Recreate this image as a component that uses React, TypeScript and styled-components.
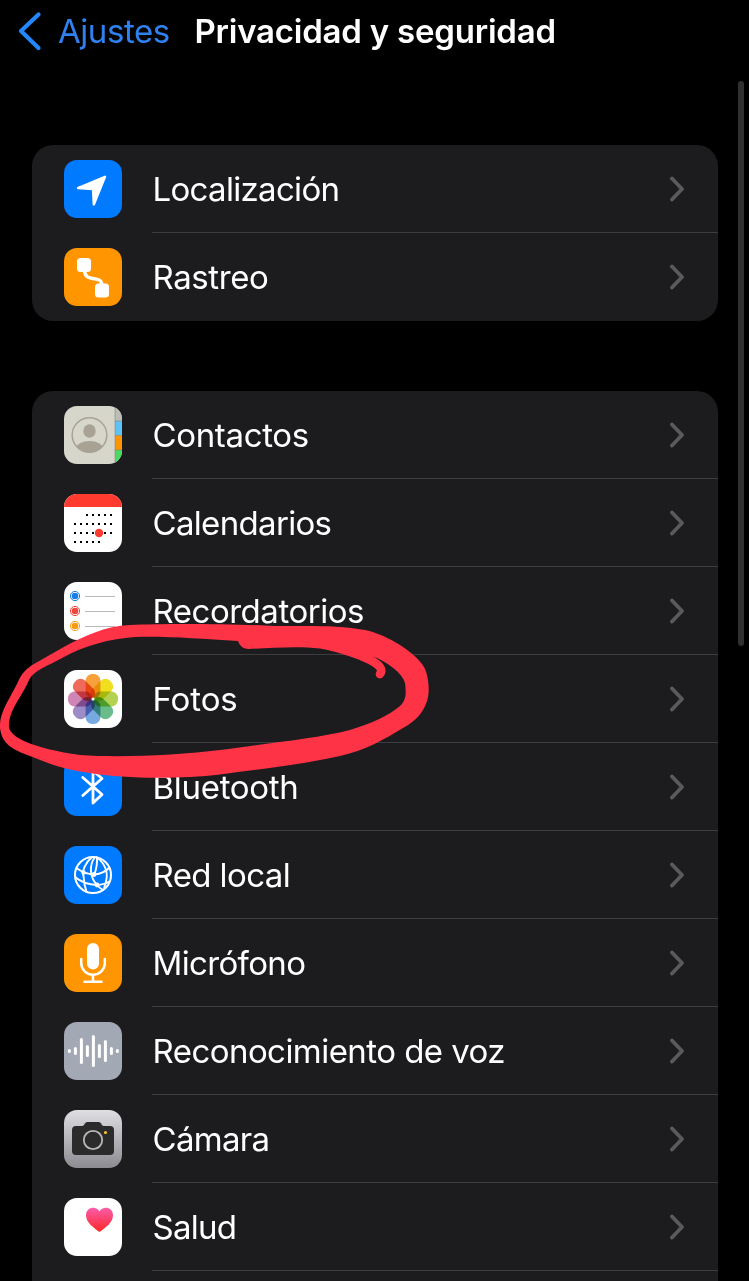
import React from "react"
import styled, { createGlobalStyle } from "styled-components"

const GlobalStyle = createGlobalStyle`
  body {
    margin: 0;
    background: #000;
    overflow: hidden;
  }
`;

const Screen = styled.main`
  position: relative;
  height: 1281px;
  overflow: hidden;
  background: #000;
  color: #fff;
  font-family: Inter, "Liberation Sans", sans-serif;
`;

const Header = styled.header`
  display: flex;
  align-items: center;
  height: 62px;
  padding-left: 18px;
  white-space: nowrap;
`;

const Back = styled.a`
  display: flex;
  align-items: center;
  gap: 16px;
  width: 176.5px;
  color: #2f81f0;
  font-size: 33px;
  letter-spacing: -0.45px;
`;

const Title = styled.h1`
  margin: 0;
  font-size: 33px;
  font-weight: 600;
  letter-spacing: -0.22px;
`;

const Content = styled.div`
  display: flex;
  flex-direction: column;
  gap: 70px;
  padding: 83px 31px 0 32px;
`;

const Group = styled.ul`
  margin: 0;
  padding: 0;
  list-style: none;
  border-radius: 21px;
  background: #1c1c1e;
  overflow: hidden;
`;

const Row = styled.li`
  display: flex;
  align-items: center;
  gap: 30px;
  height: 88px;
  padding-left: 32px;
`;

const Icon = styled.svg`
  flex: none;
  width: 58px;
  height: 58px;
  border-radius: 13px;
`;

const RowBody = styled.div<{ $last?: boolean }>`
  flex: 1;
  display: flex;
  align-items: center;
  justify-content: space-between;
  box-sizing: border-box;
  height: 88px;
  padding-right: 33px;
  border-bottom: 1px solid ${props => props.$last ? "transparent" : "#3d3d41"};
`;

const Label = styled.span<{ $spacing: number }>`
  padding-left: 0.5px;
  font-size: 33px;
  line-height: 44px;
  white-space: nowrap;
  letter-spacing: ${props => props.$spacing}px;
`;

const ScrollBar = styled.div`
  position: absolute;
  top: 81px;
  right: 5px;
  width: 6px;
  height: 565px;
  border-radius: 3px;
  background: #303030;
`;

const Marker = styled.svg`
  position: absolute;
  top: 0;
  left: 0;
  pointer-events: none;
`;

const Petal = styled.rect`
  mix-blend-mode: multiply;
`;

function Chevron() {
  return (
    <svg width="16" height="26" viewBox="0 0 16 26" fill="none" stroke="#5a5a5e" strokeWidth="3.8" strokeLinecap="round" strokeLinejoin="round">
      <path d="M3 2.5 13 13 3 23.5" />
    </svg>
  )
}

function LocationIcon() {
  return (
    <Icon viewBox="0 0 58 58">
      <rect width="58" height="58" fill="#007aff" />
      <path d="M14 28 41 16.8 29.8 44.5 29 29Z" fill="#fff" stroke="#fff" strokeWidth="2.4" strokeLinejoin="round" />
    </Icon>
  )
}

function TrackingIcon() {
  return (
    <Icon viewBox="0 0 58 58">
      <rect width="58" height="58" fill="#ff9500" />
      <rect x="13" y="10" width="14" height="14" rx="3.5" fill="#fff" />
      <rect x="31" y="35.5" width="14" height="14" rx="3.5" fill="#fff" />
      <path d="M20.5 22C20.5 36 37.8 26 37.8 37" fill="none" stroke="#fff" strokeWidth="3.4" />
    </Icon>
  )
}

function ContactsIcon() {
  return (
    <Icon viewBox="0 0 58 58">
      <defs>
        <clipPath id="contact"><circle cx="25.5" cy="29" r="17.3" /></clipPath>
      </defs>
      <rect width="58" height="58" fill="#d7d6cb" />
      <rect x="51" width="7" height="15" fill="#bdbdb8" />
      <rect x="51" y="15" width="7" height="14.5" fill="#5bc2fa" />
      <rect x="51" y="29.5" width="7" height="14.5" fill="#ff9500" />
      <rect x="51" y="44" width="7" height="14" fill="#4cd964" />
      <path d="M51 0V58M51 15H58M51 29.5H58M51 44H58" stroke="#77766d" strokeOpacity=".6" strokeWidth=".8" />
      <circle cx="25.5" cy="29" r="17.3" fill="none" stroke="#a8a295" strokeWidth="1.5" />
      <g clipPath="url(#contact)" fill="#a8a295">
        <ellipse cx="25.5" cy="25" rx="6.2" ry="6.8" />
        <ellipse cx="25.5" cy="43" rx="13.5" ry="8" />
      </g>
    </Icon>
  )
}

function CalendarIcon() {
  const lines = [
    { y: 21, from: 2, to: 6 },
    { y: 30, from: 0, to: 6 },
    { y: 39, from: 0, to: 6 },
    { y: 48, from: 0, to: 4 },
  ]
  return (
    <Icon viewBox="0 0 58 58">
      <rect width="58" height="58" fill="#fff" />
      <rect width="58" height="13" fill="#ff3b30" />
      {lines.map(line => [0, 1, 2, 3, 4, 5, 6]
        .filter(day => day >= line.from && day <= line.to)
        .map(day => <rect key={`${line.y}-${day}`} x={10 + day * 6} y={line.y - 1} width="2" height="2" fill="#000" />)
      )}
      <circle cx="35" cy="39" r="4.2" fill="#ff3b30" />
    </Icon>
  )
}

function RemindersIcon() {
  const items = [
    { y: 14, color: "#1a7ce6" },
    { y: 29, color: "#f0453c" },
    { y: 44, color: "#f99a14" },
  ]
  return (
    <Icon viewBox="0 0 58 58">
      <rect width="58" height="58" fill="#fff" />
      {items.map(item => (
        <g key={item.y}>
          <circle cx="11" cy={item.y} r="4.6" fill="none" stroke={item.color} strokeWidth="1" />
          <circle cx="11" cy={item.y} r="3.3" fill={item.color} />
          <path d={`M21 ${item.y + .5}H51`} stroke="#b9b9bb" strokeWidth="1" />
        </g>
      ))}
    </Icon>
  )
}

function PhotosIcon() {
  const petals = ["#f8a13a", "#efdf20", "#b3d251", "#69bd8b", "#76a9df", "#9e8cc8", "#cf86b7", "#ef6a5b"]
  return (
    <Icon viewBox="0 0 58 58">
      <rect width="58" height="58" fill="#fff" />
      {petals.map((color, i) => (
        <Petal key={color} x="21.6" y="4" width="14.8" height="24.3" rx="6.6" fill={color} transform={`rotate(${i * 45} 29 29)`} />
      ))}
      <circle cx="29" cy="29" r="1.5" fill="#fff" />
    </Icon>
  )
}

function BluetoothIcon() {
  return (
    <Icon viewBox="0 0 58 58">
      <rect width="58" height="58" fill="#007aff" />
      <path d="M18.8 19.5 38 36.5 29 45V12.8L38 20.5 18.8 37.5" fill="none" stroke="#fff" strokeWidth="2.8" strokeLinejoin="round" strokeLinecap="round" />
    </Icon>
  )
}

function NetworkIcon() {
  return (
    <Icon viewBox="0 0 58 58">
      <rect width="58" height="58" fill="#007aff" />
      <g fill="none" stroke="#fff" strokeWidth="1.9">
        <circle cx="29" cy="29" r="18" strokeWidth="2.1" />
        <path d="M28 11C21 17 18 25 19.5 30Q20 39 22.5 45.5M31 11C25 19 25.5 31 33 39Q35.5 42 39 44M32 11C39 15 44 24 42.5 33Q42 37 40 42M33 11Q33.5 20 30.5 28" />
        <path d="M12.5 22Q20 28 30.5 28.5Q40 27.5 45.5 21.5M11 31Q20 38.5 33 39Q41 38.5 46 35" />
      </g>
      <circle cx="19.5" cy="26.5" r="2.2" fill="#fff" />
      <circle cx="30" cy="28.5" r="2.4" fill="#fff" />
      <circle cx="33" cy="39" r="2.4" fill="#fff" />
    </Icon>
  )
}

function MicrophoneIcon() {
  return (
    <Icon viewBox="0 0 58 58">
      <rect width="58" height="58" fill="#ff9500" />
      <rect x="23" y="9" width="12" height="26.5" rx="6" fill="#fff" />
      <path d="M17.2 25V29A11.8 11.8 0 0 0 40.8 29V25M29 41V47.5M20.5 47.7H37.5" fill="none" stroke="#fff" strokeWidth="2.5" strokeLinecap="round" />
    </Icon>
  )
}

function SpeechIcon() {
  const bars = [4, 8, 26, 12, 32, 14, 22, 8, 4]
  return (
    <Icon viewBox="0 0 58 58">
      <rect width="58" height="58" fill="#a3a8b5" />
      {bars.map((height, i) => (
        <rect key={i} x={3.9 + i * 6} y={29 - height / 2} width="3" height={height} rx="1.5" fill="#fff" />
      ))}
    </Icon>
  )
}

function CameraIcon() {
  return (
    <Icon viewBox="0 0 58 58">
      <defs>
        <linearGradient id="camera" x2="0" y2="1">
          <stop stopColor="#dfdee2" />
          <stop offset="1" stopColor="#8c8b91" />
        </linearGradient>
      </defs>
      <rect width="58" height="58" fill="url(#camera)" />
      <path d="M12 16H18C21 16 20 12 23.5 12H34.5C38 12 37 16 40 16H46Q50 16 50 20V41Q50 45 46 45H12Q8 45 8 41V20Q8 16 12 16Z" fill="#2b2b2c" />
      <circle cx="29" cy="30" r="9.2" fill="#2b2b2c" stroke="#b7b7bb" strokeWidth="1.8" />
      <circle cx="41.5" cy="22.5" r="1.5" fill="#ffc72e" />
    </Icon>
  )
}

function HealthIcon() {
  return (
    <Icon viewBox="0 0 58 58">
      <defs>
        <linearGradient id="heart" x2="0" y2="1">
          <stop stopColor="#fa5baa" />
          <stop offset="1" stopColor="#fd2827" />
        </linearGradient>
      </defs>
      <rect width="58" height="58" fill="#fff" />
      <path d="M35.5 34C30 30 22 24.5 22 17.5C22 9 32 7.5 35.5 13.5C39 7.5 49 9 49 17.5C49 24.5 41 30 35.5 34Z" fill="url(#heart)" />
    </Icon>
  )
}

interface Item {
  label: string,
  spacing: number,
  icon: () => React.JSX.Element,
}

const groups: Item[][] = [
  [
    { label: "Localización", spacing: -0.68, icon: LocationIcon },
    { label: "Rastreo", spacing: -0.4, icon: TrackingIcon },
  ],
  [
    { label: "Contactos", spacing: -0.35, icon: ContactsIcon },
    { label: "Calendarios", spacing: -0.67, icon: CalendarIcon },
    { label: "Recordatorios", spacing: -0.48, icon: RemindersIcon },
    { label: "Fotos", spacing: -0.1, icon: PhotosIcon },
    { label: "Bluetooth", spacing: -0.3, icon: BluetoothIcon },
    { label: "Red local", spacing: -0.6, icon: NetworkIcon },
    { label: "Micrófono", spacing: -0.65, icon: MicrophoneIcon },
    { label: "Reconocimiento de voz", spacing: -0.55, icon: SpeechIcon },
    { label: "Cámara", spacing: -0.7, icon: CameraIcon },
    { label: "Salud", spacing: -0.75, icon: HealthIcon },
  ],
]

export default function App() {
  return (
    <>
      <GlobalStyle />
      <Screen>
        <Header>
          <Back>
            <svg width="24" height="40" viewBox="0 0 24 40" fill="none" stroke="#2388ff" strokeWidth="4.2" strokeLinecap="round" strokeLinejoin="round">
              <path d="M20.5 3.5 3 20 20.5 37" />
            </svg>
            Ajustes
          </Back>
          <Title>Privacidad y seguridad</Title>
        </Header>
        <Content>
          {groups.map((items, g) => (
            <Group key={g}>
              {items.map(({ label, spacing, icon: ItemIcon }, i) => (
                <Row key={label}>
                  <ItemIcon />
                  <RowBody $last={g === 0 && i === items.length - 1}>
                    <Label $spacing={spacing}>{label}</Label>
                    <Chevron />
                  </RowBody>
                </Row>
              ))}
              {g === 1 && <Row />}
            </Group>
          ))}
        </Content>
        <ScrollBar />
        <Marker width="440" height="800" viewBox="0 0 440 800">
          <path
            fill="#ff3346"
            d="M0 728C-1 713 9 700 18 682C21 674 27 668 34 664L62 648C84 636 105 626 130 625C170 623 235 624 275 626C310 626 340 625 365 630C389 635 417 654 424 667C429 676 430 693 427 701C423 714 414 722 403 728C385 739 366 750 340 756C300 765 260 769 220 774.5C180 779 125 779 90 773C65 770 47 763 30 756C14 750 2 745 0 728ZM9 727C10 733 16 737 24 741C37 747 58 752 80 755C120 758 180 755 220 750C260 744 315 739 350 730C370 724 390 715 400 706C407 699 406 692 405 683C403 674 388 662 373 656.5C384 662 389 670 383 677C379 681 373 676 377 671C376 665 348 654 320 648.5C298 646 270 648 248 649Q240 648 238 641C200 639 168 636 135 637C110 639 85 645 62 658C48 666 34 670 29 680C22 697 8 711 9 727Z"
          />
        </Marker>
      </Screen>
    </>
  )
}
